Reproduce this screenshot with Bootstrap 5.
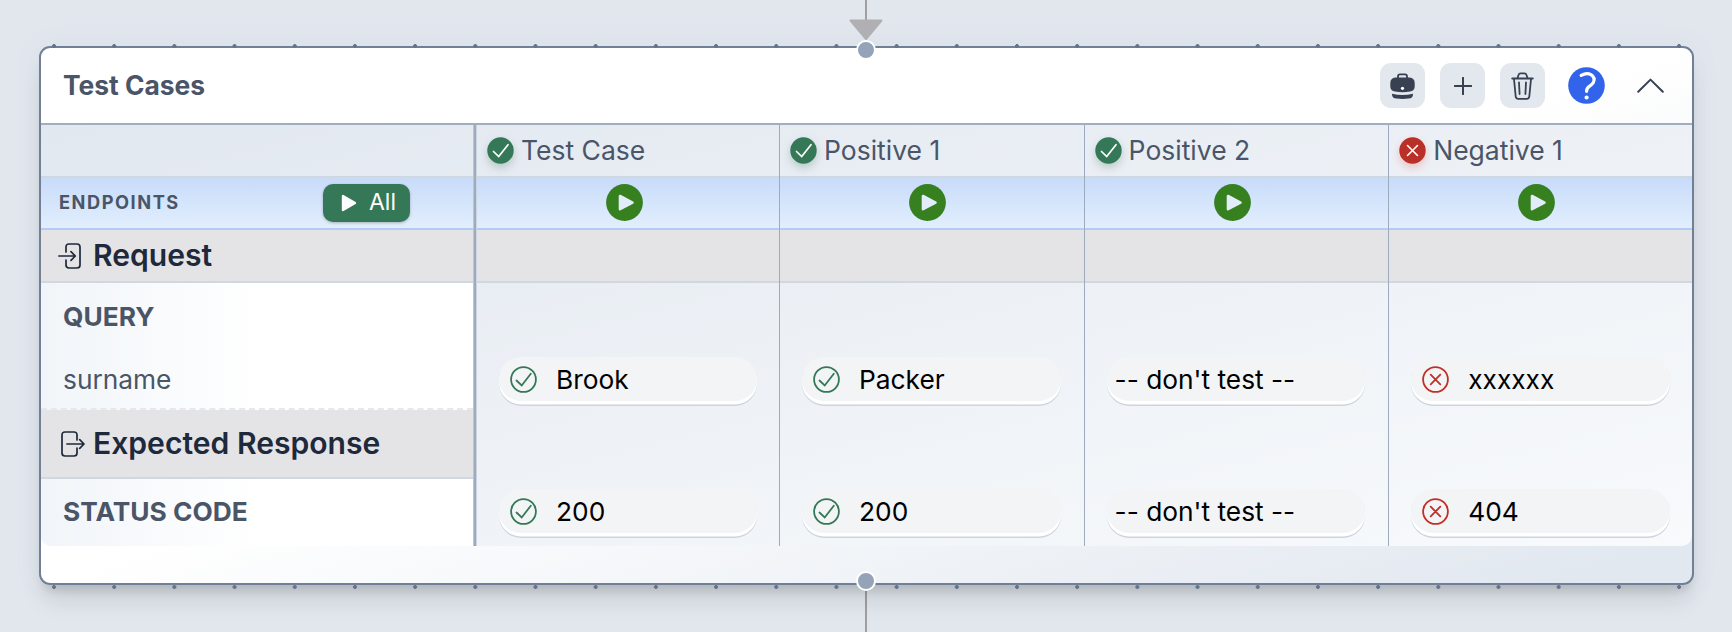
<!DOCTYPE html>
<html lang="en">
<head>
<meta charset="utf-8">
<meta name="viewport" content="width=device-width, initial-scale=1">
<title>Test Cases</title>
<link href="https://cdn.jsdelivr.net/npm/bootstrap@5.3.0/dist/css/bootstrap.min.css" rel="stylesheet">
<style>
body{width:1732px;height:632px;overflow:hidden;background:#e2e7ee;font-family:Inter,"Liberation Sans",sans-serif;color:#4a5568;font-size:26.3px;line-height:1}
svg{display:block;flex:none}
.flow-node{margin:46px 39px 0;width:1655px;height:539px;border:2px solid #718096;border-radius:11px;background:linear-gradient(to bottom right,#fff 50%,#e2e8f0 96%);box-shadow:0 20px 25px -5px rgba(0,0,0,.1),0 10px 10px -5px rgba(0,0,0,.12),0 0 30px rgba(100,116,139,.06)}
.dots{left:11px;right:10px;height:4px;background:radial-gradient(circle at 2px 2px,#64748b 1.6px,transparent 2.2px) 0 0/60.2px 4px repeat-x}
.dots-t{top:-4px}.dots-b{bottom:-6px}
.wire{left:865px;width:2px;background:#a0a0a3}
.port{width:20px;height:20px;border:2px solid #fff;background:#94a3b8;left:856px}
.arrow{left:848px;top:18px}
.node-head{height:77px;border-bottom:2px solid #a0aec0;padding:0 22px 0 22px}
.node-title{font-weight:700;font-size:26.4px}
.tool{width:45px;height:45px;border-radius:11px;background:#e3e8ee}
.tbl{height:421px;border-radius:0 0 10px 10px;background:linear-gradient(to bottom right,#e2e8f0,#f8fafc)}
.names{width:436px;box-shadow:inset -1px 0 #cbd5e0,inset -3px 0 #9eabbd,inset -4px 0 #bcc6d3;padding-right:4px}
.r-top{height:52px;border-bottom:1px solid #cfd6de}
.r-run{height:53px;border-bottom:2px solid #b3cbf5;background:linear-gradient(#c7dbf9,#e2eefd)}
.r-sec{height:53px;background:#e4e4e6;border-bottom:2px solid #d0d7e1}
.r-res{height:69px}
.fade-l{background:linear-gradient(to right,#f1f5f9,#fff 50%)}
.case{width:304.6px;border-left:1px solid #9eabbf}
.case:first-child{border-left:0;width:302px}
.case .r-top{padding-left:10px}
.case .r-top span{font-size:26.5px;margin-left:7px}
.sec-title{font-size:30.1px;font-weight:600;color:#1e293b}
.ends{font-size:18.2px;font-weight:700;letter-spacing:1.55px}
.all-btn{width:87px;height:38px;border-radius:10px;background:#357857;color:#fff;font-size:23px;box-shadow:0 1px 3px rgba(0,0,0,.25)}
.disc{filter:drop-shadow(0 4px 4px rgba(40,90,70,.25))}
.disc-r{filter:drop-shadow(0 4px 4px rgba(220,38,38,.22))}
.pill{height:49px;margin:0 23px 0 22px;border-radius:22px;background:#f3f4f6;color:#000;box-shadow:inset 0 -1.500px #cbd5e0,inset 0 -5px #fff;padding:0 0 5px 11px}
.case:first-child .pill{margin-right:22px}
.pill span{padding-top:2px}
.q-row{height:127px;border-bottom:2px dashed #e4e9ef}
</style>
</head>
<body class="position-relative">
<svg width="0" height="0" class="position-absolute">
<symbol id="ok" viewBox="0 0 27 27"><circle cx="13.5" cy="13.5" r="13.2" fill="#357857"/><path d="M6.500 14.500l5.200 5L21 7.700" fill="none" stroke="#fff" stroke-width="1.7" stroke-linecap="round"/></symbol>
<symbol id="no" viewBox="0 0 27 27"><circle cx="13.5" cy="13.5" r="13.2" fill="#b83028"/><path d="M8.5 8.5l10 10m0-10l-10 10" stroke="#fff" stroke-width="1.6" stroke-linecap="round"/></symbol>
<symbol id="oko" viewBox="0 0 27 27"><g fill="none" stroke="#357857" stroke-width="1.8" stroke-linecap="round"><circle cx="13.5" cy="13.5" r="12.4"/><path d="M6.5 14.5l5.2 5L20.8 7.7"/></g></symbol>
<symbol id="noo" viewBox="0 0 27 27"><g fill="none" stroke="#c03028" stroke-width="1.8" stroke-linecap="round"><circle cx="13.5" cy="13.5" r="12.4"/><path d="M8.7 8.7l9.6 9.6m0-9.6l-9.6 9.6"/></g></symbol>
<symbol id="run" viewBox="0 0 37 37"><circle cx="18.5" cy="18.5" r="18.4" fill="#378020"/><path d="M14 12v13.200L26.500 18.600z" fill="#e2ecfb" stroke="#e2ecfb" stroke-width="2.6" stroke-linejoin="round"/></symbol>
</svg>
<div class="position-absolute wire" style="top:0;height:22px"></div>
<div class="position-absolute wire" style="top:584px;height:48px"></div>
<main class="flow-node position-absolute top-0 start-0">
  <div class="position-absolute dots dots-t"></div>
  <div class="position-absolute dots dots-b"></div>
  <header class="node-head d-flex align-items-center justify-content-between">
    <div class="node-title">Test Cases</div>
    <div class="d-flex align-items-center">
      <div class="tool d-flex align-items-center justify-content-center me-3">
        <svg width="25" height="26" viewBox="0 0 25 26" fill="#374151"><path d="M8 5V3.5Q8 1.300 10 1.300h5q2 0 2 2.200V5" fill="none" stroke="#374151" stroke-width="1.8"/><path d="M5.5 4.5h14Q24.7 5 24.7 10v3.8Q24.5 18 20 18.5q-7.5 1.3-15 0Q.5 18 .3 13.8V10Q.3 5 5.5 4.5z"/><path d="M2 20.800q10.500 2.400 21 0 .2 4.400-4.500 4.800-6 .7-12 0-4.700-.4-4.500-4.800z"/><circle cx="12.500" cy="15.300" r="1.600" fill="#fff"/></svg>
      </div>
      <div class="tool d-flex align-items-center justify-content-center me-3" style="margin-left:-1px">
        <svg width="18" height="18" viewBox="0 0 18 18"><path d="M9 .8v16.400M.8 9h16.400" stroke="#374151" stroke-width="2" stroke-linecap="round"/></svg>
      </div>
      <div class="tool d-flex align-items-center justify-content-center" style="margin-left:-1px">
        <svg width="23" height="28" viewBox="0 0 23 28" fill="none" stroke="#374151" stroke-width="1.800" stroke-linecap="round" stroke-linejoin="round"><path d="M1.200 6.500h20.600M3 7l1.700 17.500q.2 2.300 2.500 2.300h8.600q2.300 0 2.500-2.300L20 7M6.500 6l1-3q.5-1.700 2-1.700h4q1.500 0 2 1.700l1 3M8 10.500l.6 11.500M15 10.500l-.6 11.500"/></svg>
      </div>
      <svg width="37" height="37" viewBox="0 0 37 37" style="margin-left:23px"><circle cx="18.500" cy="18.500" r="18.300" fill="#3163eb"/><path d="M13.200 8.400Q18.500 5.300 23 7.600q4.800 3.200 2.300 8-1.300 1.900-4.300 4-2.500 1.800-2.400 4.700" fill="none" stroke="#fff" stroke-width="3.200" stroke-linecap="round"/><circle cx="18.600" cy="30.500" r="2.100" fill="#fff"/></svg>
      <svg width="27" height="15" viewBox="0 0 27 15" style="margin-left:32px;margin-right:6px"><path d="M1.200 13.800L13.500 1.600l12.300 12.200" fill="none" stroke="#374151" stroke-width="2" stroke-linecap="round" stroke-linejoin="round"/></svg>
    </div>
  </header>
  <section class="tbl d-flex overflow-hidden">
    <div class="names flex-shrink-0">
      <div class="r-top"></div>
      <div class="r-run d-flex align-items-center"><span class="ends" style="margin-left:18px">ENDPOINTS</span>
        <div class="all-btn d-flex align-items-center ms-auto" style="margin-right:63px"><svg width="16" height="18" viewBox="0 0 16 18" style="margin-left:18px;margin-right:12px"><path d="M2 2v14l12-7z" fill="#fff" stroke="#fff" stroke-width="2.400" stroke-linejoin="round"/></svg>All</div>
      </div>
      <div class="r-sec d-flex align-items-center"><svg width="24" height="26" viewBox="0 0 24 26" style="margin-left:17px;margin-right:11px" fill="none" stroke="#1e293b" stroke-width="1.700" stroke-linecap="round" stroke-linejoin="round"><path d="M8 9V4q0-3 3-3h8q3 0 3 3v18q0 3-3 3h-8q-3 0-3-3v-5M.8 13H17M13 8.700l4.300 4.300-4.300 4.300"/></svg><span class="sec-title">Request</span></div>
      <div class="q-row fade-l d-flex flex-column"><span class="fw-bold" style="margin:21px 0 0 22px">QUERY</span><span style="margin:37px 0 0 22px">surname</span></div>
      <div class="r-sec r-res d-flex align-items-center"><svg width="24" height="26" viewBox="0 0 24 26" style="margin-left:20px;margin-right:8px" fill="none" stroke="#1e293b" stroke-width="1.700" stroke-linecap="round" stroke-linejoin="round"><path d="M16 9V4q0-3-3-3H4Q1 1 1 4v18q0 3 3 3h9q3 0 3-3v-5M6 13h17M18.700 8.700L23 13l-4.300 4.300"/></svg><span class="sec-title">Expected Response</span></div>
      <div class="fade-l d-flex align-items-center fw-bold" style="height:67px;padding-left:22px">STATUS CODE</div>
    </div>
    <div class="d-flex" id="cases"></div>
  </section>
</main>
<svg class="position-absolute arrow" width="36" height="26" viewBox="0 0 36 26"><path d="M2.500 2.500h31L18 21z" fill="#b0afb3" stroke="#b0afb3" stroke-width="2" stroke-linejoin="round"/></svg>
<div class="position-absolute rounded-circle port" style="top:40px"></div>
<div class="position-absolute rounded-circle port" style="top:571px"></div>
<script>
const cases=[["Test Case",1,"Brook","200"],["Positive 1",1,"Packer","200"],["Positive 2",1,null,null],["Negative 1",0,"xxxxxx","404"]];
const pill=(v,ok)=>`<div class="pill d-flex align-items-center">${v===null?`<span style="margin-left:-3px">-- don't test --</span>`:`<svg width="27" height="27"><use href="#${ok?'oko':'noo'}"/></svg><span style="margin-left:19px">${v}</span>`}</div>`;
document.getElementById("cases").innerHTML=cases.map(([n,ok,a,b])=>`<div class="case flex-shrink-0">
<div class="r-top d-flex align-items-center"><svg class="${ok?'disc':'disc-r'}" width="27" height="27" overflow="visible"><use href="#${ok?'ok':'no'}"/></svg><span>${n}</span></div>
<div class="r-run d-flex align-items-center justify-content-center"><svg width="37" height="37" style="margin-right:8px"><use href="#run"/></svg></div>
<div class="r-sec"></div>
<div style="padding-top:74px">${pill(a,ok)}</div><div style="padding-top:83px">${pill(b,ok)}</div></div>`).join("");
</script>
<script src="https://cdn.jsdelivr.net/npm/bootstrap@5.3.0/dist/js/bootstrap.bundle.min.js"></script>
</body>
</html>
